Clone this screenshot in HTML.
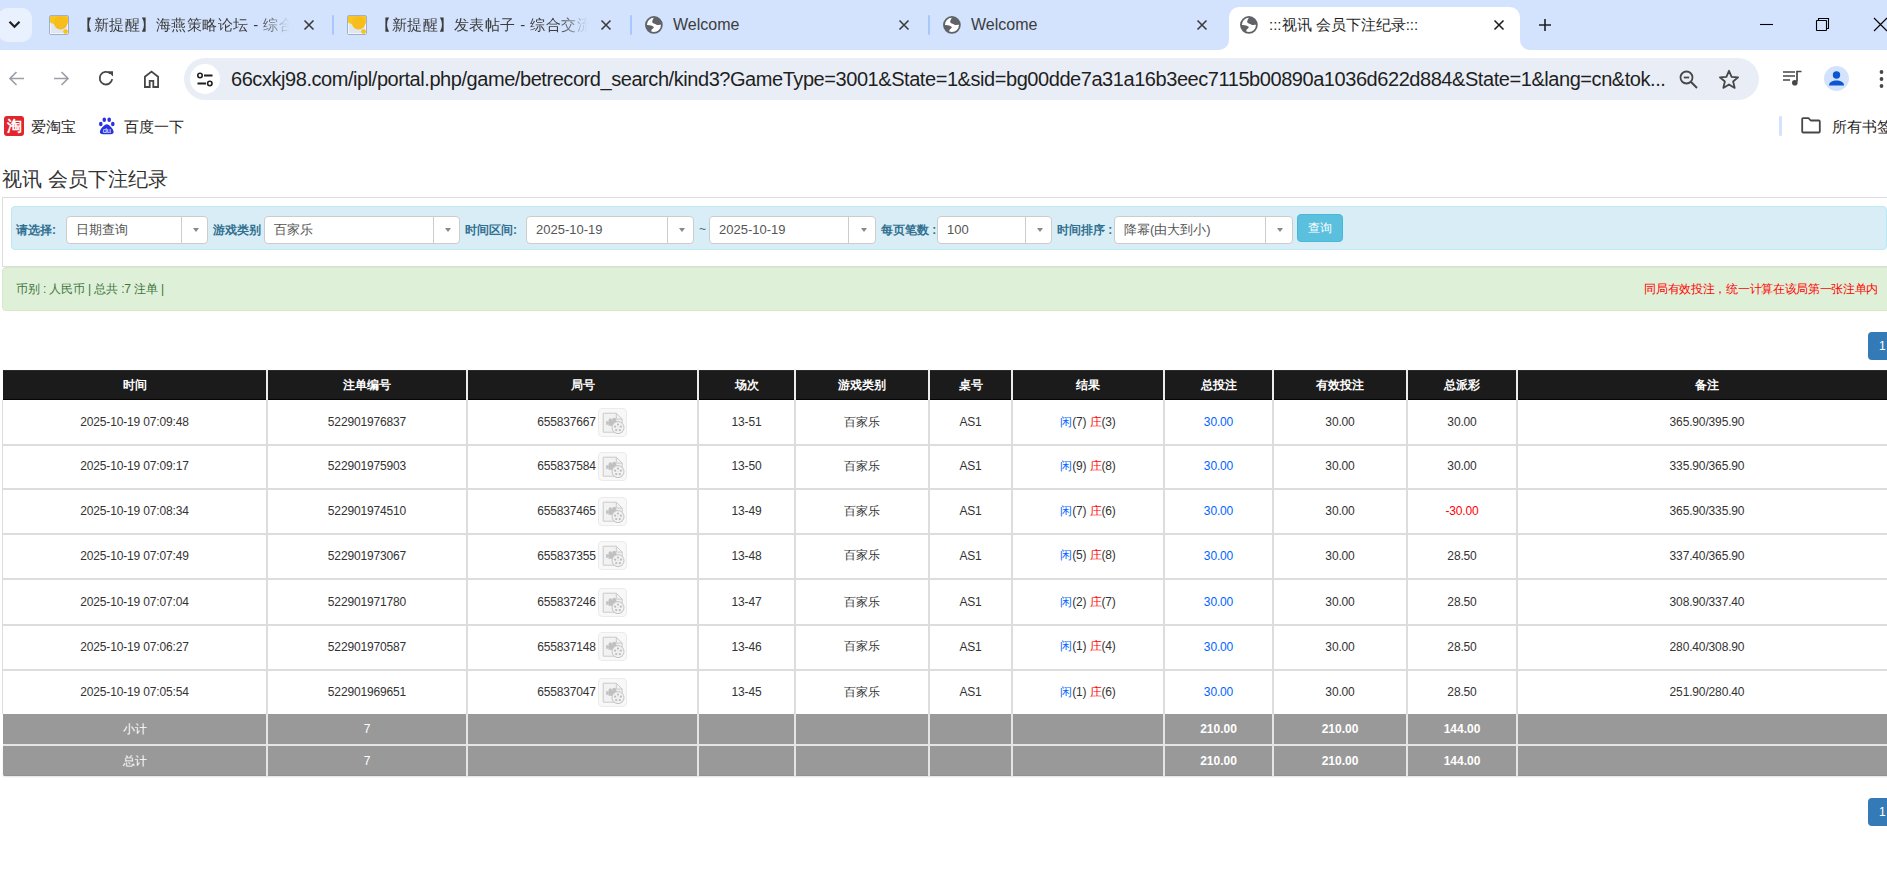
<!DOCTYPE html>
<html><head><meta charset="utf-8">
<style>
*{box-sizing:border-box;}
html,body{margin:0;padding:0;width:1887px;height:888px;overflow:hidden;background:#fff;font-family:"Liberation Sans",sans-serif;}
.abs{position:absolute;}
#tabstrip{position:absolute;left:0;top:0;width:1887px;height:50px;background:#d3e3fd;}
.tabtitle{position:absolute;top:14px;height:22px;font-size:15px;line-height:22px;color:#3c3c3c;white-space:nowrap;overflow:hidden;}
.fade{-webkit-mask-image:linear-gradient(to right,#000 86%,transparent 100%);}
.sep{position:absolute;top:15px;width:2px;height:20px;background:#a8c7fa;border-radius:1px;}
#toolbar{position:absolute;left:0;top:50px;width:1887px;height:58px;background:#fff;}
#omni{position:absolute;left:184px;top:58px;width:1575px;height:42px;border-radius:21px;background:#e9eef6;}
#url{position:absolute;left:231px;top:66px;height:26px;font-size:20px;line-height:26px;letter-spacing:-0.44px;color:#1f1f1f;white-space:nowrap;}
.bm{position:absolute;top:117px;font-size:15px;line-height:20px;color:#1f1f1f;white-space:nowrap;}
#page{position:absolute;left:0;top:0;width:1887px;height:888px;}
.title{position:absolute;left:2px;top:166px;font-size:20px;line-height:26px;color:#333;white-space:nowrap;}
#panel{position:absolute;left:2px;top:197px;width:1900px;height:70px;border:1px solid #ddd;}
#infobar{position:absolute;left:11px;top:206px;width:1876px;height:44px;background:#d9edf7;border:1px solid #bce8f1;border-radius:4px;}
.lbl{position:absolute;top:222px;font-size:12px;line-height:16px;font-weight:bold;color:#31708f;white-space:nowrap;}
.sel{position:absolute;top:216px;height:28px;background:#fff;border:1px solid #ccc;border-radius:4px;}
.sel .txt{position:absolute;left:9px;top:5px;font-size:13px;line-height:16px;color:#555;white-space:nowrap;}
.sel .dv{position:absolute;top:0;bottom:0;width:1px;background:#ccc;}
.sel .ar{position:absolute;top:11px;width:0;height:0;border-left:3.5px solid transparent;border-right:3.5px solid transparent;border-top:4px solid #888;}
#btn{position:absolute;left:1297px;top:214px;width:46px;height:28px;background:#5bc0de;border:1px solid #46b8da;border-radius:4px;color:#fff;font-size:12px;line-height:26px;text-align:center;}
#okbar{position:absolute;left:2px;top:267px;width:1900px;height:44px;background:#dff0d8;border:1px solid #d6e9c6;border-radius:4px;}
.oktxt{position:absolute;left:16px;top:281px;font-size:12px;line-height:16px;color:#3c763d;white-space:nowrap;letter-spacing:-0.14px;}
.redtxt{position:absolute;right:9px;top:281px;font-size:12px;line-height:16px;color:#f00;white-space:nowrap;letter-spacing:-0.32px;}
.pg{position:absolute;left:1868px;width:40px;height:28px;background:#337ab7;border-radius:4px;color:#fff;font-size:12px;line-height:28px;padding-left:11px;}

.thead{position:absolute;background:#1b1b1b;border-top:1px solid #2a2a2a;border-bottom:1px solid #050505;}
.th{position:absolute;display:flex;align-items:center;justify-content:center;color:#fff;font-weight:bold;font-size:12px;}
.vsh{position:absolute;width:2px;background:#ececec;border-radius:1px 1px 0 0;}
.vs{position:absolute;width:2px;background:#ddd;}
.hs{position:absolute;height:2px;background:#ddd;}
.td{position:absolute;display:flex;align-items:center;justify-content:center;color:#333;font-size:12px;white-space:nowrap;letter-spacing:-0.15px;}
.td .ic{margin-left:2px;margin-right:1px;}
.td b{font-weight:normal;}
.x{color:#0064ff;} .z{color:#f00;}
.blue{color:#0064ff;} .red{color:#f00;}
.tot{position:absolute;background:#999;box-sizing:border-box;}
.hl{position:absolute;}
.hst{position:absolute;height:2px;background:#e5e5e5;}
.vst{position:absolute;width:2px;background:#e5e5e5;}
.tt{position:absolute;display:flex;align-items:center;justify-content:center;color:#fff;font-size:12px;}
.tt.b{font-weight:bold;}
</style></head><body>
<div id="tabstrip"></div>
<div id="toolbar"></div>
<div id="omni"></div>
<!-- tab search button -->
<div class="abs" style="left:-2px;top:8px;width:34px;height:34px;border-radius:10px;background:#eaf1fe"></div>
<svg class="abs" style="left:8px;top:20px" width="13" height="9" viewBox="0 0 13 9"><path d="M1.5 1.8L6.5 6.8L11.5 1.8" fill="none" stroke="#1f1f1f" stroke-width="2.2"/></svg>
<!-- tab 1 -->
<svg class="abs" style="left:49px;top:15px" width="20" height="20" viewBox="0 0 20 20"><rect x="0.5" y="0.5" width="19" height="19" rx="1.5" fill="#dfe6ef" stroke="#9fb0c8"/><rect x="1.5" y="1.5" width="17" height="17" fill="none" stroke="#f3f6fa" stroke-width="1"/><path d="M1 1h18v7.6h-0.6A6.8 6.8 0 0 1 5.2 9.2Q3 8.6 1 7.6z" fill="#f9c520"/><circle cx="11.6" cy="7.8" r="6.6" fill="#f7bd1c"/><circle cx="16.6" cy="16.6" r="2.4" fill="#f8c21c"/></svg>
<div class="tabtitle fade" style="left:78px;width:212px;letter-spacing:0.5px">【新提醒】海燕策略论坛 - 综合交流</div>
<svg class="abs xclose" style="left:303px;top:19px" width="12" height="12" viewBox="0 0 12 12"><path d="M1.5 1.5L10.5 10.5M10.5 1.5L1.5 10.5" stroke="#3c3c3c" stroke-width="1.6"/></svg>
<div class="sep" style="left:332px"></div>
<!-- tab 2 -->
<svg class="abs" style="left:347px;top:15px" width="20" height="20" viewBox="0 0 20 20"><rect x="0.5" y="0.5" width="19" height="19" rx="1.5" fill="#dfe6ef" stroke="#9fb0c8"/><rect x="1.5" y="1.5" width="17" height="17" fill="none" stroke="#f3f6fa" stroke-width="1"/><path d="M1 1h18v7.6h-0.6A6.8 6.8 0 0 1 5.2 9.2Q3 8.6 1 7.6z" fill="#f9c520"/><circle cx="11.6" cy="7.8" r="6.6" fill="#f7bd1c"/><circle cx="16.6" cy="16.6" r="2.4" fill="#f8c21c"/></svg>
<div class="tabtitle fade" style="left:376px;width:212px;letter-spacing:0.5px">【新提醒】发表帖子 - 综合交流区</div>
<svg class="abs" style="left:600px;top:19px" width="12" height="12" viewBox="0 0 12 12"><path d="M1.5 1.5L10.5 10.5M10.5 1.5L1.5 10.5" stroke="#3c3c3c" stroke-width="1.6"/></svg>
<div class="sep" style="left:630px"></div>
<!-- tab 3 -->
<svg class="abs" style="left:645px;top:16px" width="18" height="18" viewBox="0 0 18 18"><defs><clipPath id="gc645"><circle cx="8.9" cy="8.9" r="8"/></clipPath></defs><circle cx="8.9" cy="8.9" r="7.9" fill="#fff"/><g clip-path="url(#gc645)" fill="#5f6368"><path d="M9.8 0C8.6 2.6 7 4.4 7.2 6.1C7.4 7.6 10 7.7 11.5 8.7C12.6 9.4 14.6 9.1 18 8.4V0Z"/><path d="M0 9C3 9.1 6.6 9.2 8.6 10.8C9.4 11.8 7.6 12.8 6.7 13.5C6.1 14.4 6.3 15.6 6.3 18H0Z"/></g><circle cx="8.9" cy="8.9" r="7.95" fill="none" stroke="#5f6368" stroke-width="1.8"/></svg>
<div class="tabtitle" style="left:673px;width:200px;font-size:16px">Welcome</div>
<svg class="abs" style="left:898px;top:19px" width="12" height="12" viewBox="0 0 12 12"><path d="M1.5 1.5L10.5 10.5M10.5 1.5L1.5 10.5" stroke="#3c3c3c" stroke-width="1.6"/></svg>
<div class="sep" style="left:928px"></div>
<!-- tab 4 -->
<svg class="abs" style="left:943px;top:16px" width="18" height="18" viewBox="0 0 18 18"><defs><clipPath id="gc943"><circle cx="8.9" cy="8.9" r="8"/></clipPath></defs><circle cx="8.9" cy="8.9" r="7.9" fill="#fff"/><g clip-path="url(#gc943)" fill="#5f6368"><path d="M9.8 0C8.6 2.6 7 4.4 7.2 6.1C7.4 7.6 10 7.7 11.5 8.7C12.6 9.4 14.6 9.1 18 8.4V0Z"/><path d="M0 9C3 9.1 6.6 9.2 8.6 10.8C9.4 11.8 7.6 12.8 6.7 13.5C6.1 14.4 6.3 15.6 6.3 18H0Z"/></g><circle cx="8.9" cy="8.9" r="7.95" fill="none" stroke="#5f6368" stroke-width="1.8"/></svg>
<div class="tabtitle" style="left:971px;width:200px;font-size:16px">Welcome</div>
<svg class="abs" style="left:1196px;top:19px" width="12" height="12" viewBox="0 0 12 12"><path d="M1.5 1.5L10.5 10.5M10.5 1.5L1.5 10.5" stroke="#3c3c3c" stroke-width="1.6"/></svg>
<!-- active tab -->
<svg class="abs" style="left:1219px;top:7px" width="311" height="43" viewBox="0 0 311 43"><path d="M0 43a10 10 0 0 0 10-10V10A10 10 0 0 1 20 0H291a10 10 0 0 1 10 10V33a10 10 0 0 0 10 10z" fill="#fff"/></svg>
<svg class="abs" style="left:1240px;top:16px" width="18" height="18" viewBox="0 0 18 18"><defs><clipPath id="gc1240"><circle cx="8.9" cy="8.9" r="8"/></clipPath></defs><circle cx="8.9" cy="8.9" r="7.9" fill="#fff"/><g clip-path="url(#gc1240)" fill="#5f6368"><path d="M9.8 0C8.6 2.6 7 4.4 7.2 6.1C7.4 7.6 10 7.7 11.5 8.7C12.6 9.4 14.6 9.1 18 8.4V0Z"/><path d="M0 9C3 9.1 6.6 9.2 8.6 10.8C9.4 11.8 7.6 12.8 6.7 13.5C6.1 14.4 6.3 15.6 6.3 18H0Z"/></g><circle cx="8.9" cy="8.9" r="7.95" fill="none" stroke="#5f6368" stroke-width="1.8"/></svg>
<div class="tabtitle" style="left:1269px;width:210px;color:#1f1f1f">:::视讯 会员下注纪录:::</div>
<svg class="abs" style="left:1493px;top:19px" width="12" height="12" viewBox="0 0 12 12"><path d="M1.5 1.5L10.5 10.5M10.5 1.5L1.5 10.5" stroke="#1f1f1f" stroke-width="1.6"/></svg>
<!-- new tab -->
<svg class="abs" style="left:1538px;top:18px" width="14" height="14" viewBox="0 0 14 14"><path d="M7 1v12M1 7h12" stroke="#1f1f1f" stroke-width="1.6"/></svg>
<!-- window controls -->
<svg class="abs" style="left:1759px;top:23px" width="15" height="3" viewBox="0 0 15 3"><path d="M1 1.5h13" stroke="#000" stroke-width="1.1"/></svg>
<svg class="abs" style="left:1815px;top:17px" width="15" height="15" viewBox="0 0 15 15"><rect x="1.5" y="3.5" width="10" height="10" rx="0.5" fill="none" stroke="#000" stroke-width="1.1"/><path d="M3.5 3.5V1.5h10v10h-2" fill="none" stroke="#000" stroke-width="1.1"/></svg>
<svg class="abs" style="left:1873px;top:17px" width="15" height="15" viewBox="0 0 15 15"><path d="M1 1L14 14M14 1L1 14" stroke="#000" stroke-width="1.1"/></svg>
<!-- toolbar icons -->
<svg class="abs" style="left:8px;top:70px" width="17" height="17" viewBox="0 0 17 17"><path d="M16 8.5H2.5M8.5 2L2 8.5L8.5 15" fill="none" stroke="#9aa0a6" stroke-width="1.7"/></svg>
<svg class="abs" style="left:53px;top:70px" width="17" height="17" viewBox="0 0 17 17"><path d="M1 8.5H14.5M8.5 2L15 8.5L8.5 15" fill="none" stroke="#9aa0a6" stroke-width="1.7"/></svg>
<svg class="abs" style="left:98px;top:70px" width="17" height="17" viewBox="0 0 17 17"><path d="M14.2 9.2A6.3 6.3 0 1 1 12.3 3.6" fill="none" stroke="#474747" stroke-width="1.8"/><path d="M9.6 1.2h5.4v5.4z" fill="#474747"/></svg>
<svg class="abs" style="left:143px;top:70px" width="17" height="18" viewBox="0 0 17 18"><path d="M1.9 17V6.8L8.5 1.6L15.1 6.8V17H10.3V10.8H6.7V17z" fill="none" stroke="#474747" stroke-width="1.8" stroke-linejoin="miter"/></svg>
<div class="abs" style="left:190px;top:64px;width:30px;height:30px;border-radius:50%;background:#fff"></div>
<svg class="abs" style="left:196px;top:72px" width="18" height="15" viewBox="0 0 18 15"><circle cx="4" cy="3.5" r="2.2" fill="none" stroke="#1f1f1f" stroke-width="1.6"/><path d="M8 3.5h8.5M1.5 11.5h8.5" stroke="#1f1f1f" stroke-width="1.8"/><circle cx="13.8" cy="11.5" r="2.2" fill="none" stroke="#1f1f1f" stroke-width="1.6"/></svg>
<svg class="abs" style="left:1679px;top:70px" width="20" height="20" viewBox="0 0 20 20"><circle cx="7.5" cy="7.5" r="6" fill="none" stroke="#474747" stroke-width="1.8"/><path d="M4.8 7.5h5.4" stroke="#474747" stroke-width="1.8"/><path d="M11.8 11.8L18 18" stroke="#474747" stroke-width="2"/></svg>
<svg class="abs" style="left:1718px;top:69px" width="22" height="21" viewBox="0 0 22 21"><path d="M11 1.8l2.6 6 6.5.5-5 4.2 1.6 6.4L11 15.4l-5.7 3.5 1.6-6.4-5-4.2 6.5-.5z" fill="none" stroke="#474747" stroke-width="1.8" stroke-linejoin="round"/></svg>
<svg class="abs" style="left:1782px;top:70px" width="21" height="17" viewBox="0 0 21 17"><path d="M1 2h12M1 6h12M1 10h7" stroke="#474747" stroke-width="1.7"/><path d="M15 11.5V1.5h4.5" fill="none" stroke="#474747" stroke-width="1.7"/><circle cx="12.8" cy="12.8" r="2.8" fill="#474747"/></svg>
<div class="abs" style="left:1824px;top:66px;width:25px;height:25px;border-radius:50%;background:#d3e3fd"></div>
<svg class="abs" style="left:1824px;top:66px" width="25" height="25" viewBox="0 0 25 25"><circle cx="12.5" cy="9" r="3.7" fill="#0b57d0"/><path d="M5 19.5c0-3.2 3.5-5 7.5-5s7.5 1.8 7.5 5z" fill="#0b57d0"/></svg>
<svg class="abs" style="left:1877px;top:69px" width="8" height="20" viewBox="0 0 8 20"><circle cx="4.5" cy="3" r="1.9" fill="#474747"/><circle cx="4.5" cy="10" r="1.9" fill="#474747"/><circle cx="4.5" cy="17" r="1.9" fill="#474747"/></svg>
<!-- bookmarks icons -->
<div class="abs" style="left:4px;top:116px;width:20px;height:20px;border-radius:3px;background:#e0262c;color:#fff;font-size:15px;line-height:20px;text-align:center;font-weight:bold">淘</div>
<svg class="abs" style="left:98px;top:116px" width="18" height="19" viewBox="0 0 18 19"><ellipse cx="2.8" cy="8" rx="1.8" ry="2.2" fill="#2932e1"/><ellipse cx="6.3" cy="3.8" rx="1.8" ry="2.3" fill="#2932e1"/><ellipse cx="11.2" cy="3.8" rx="1.8" ry="2.3" fill="#2932e1"/><ellipse cx="14.8" cy="8" rx="1.8" ry="2.2" fill="#2932e1"/><path d="M8.8 8.2C11 8.2 15.6 13 15.6 15.8C15.6 17.6 14.2 18.3 12.8 18.3H4.8C3.4 18.3 1.9 17.6 1.9 15.8C1.9 13 6.6 8.2 8.8 8.2Z" fill="#2932e1"/><text x="8.8" y="16.6" font-size="7.5" font-family="Liberation Sans" fill="#fff" text-anchor="middle">du</text></svg>
<div class="abs" style="left:1779px;top:116px;width:3px;height:20px;background:#d3e3fd;border-radius:1px"></div>
<svg class="abs" style="left:1800px;top:117px" width="22" height="17" viewBox="0 0 22 17"><path d="M2.2 2.2a1 1 0 0 1 1-1h5.3l2.2 2.3h8.1a1 1 0 0 1 1 1v10a1 1 0 0 1-1 1H3.2a1 1 0 0 1-1-1z" fill="none" stroke="#474747" stroke-width="1.8" stroke-linejoin="round"/></svg>

<div id="url">66cxkj98.com/ipl/portal.php/game/betrecord_search/kind3?GameType=3001&amp;State=1&amp;sid=bg00dde7a31a16b3eec7115b00890a1036d622d884&amp;State=1&amp;lang=cn&amp;tok...</div>

<div class="bm" style="left:31px">爱淘宝</div>
<div class="bm" style="left:124px">百度一下</div>
<div class="bm" style="left:1832px">所有书签</div>

<div class="title">视讯 会员下注纪录</div>
<div id="panel"></div>
<div id="infobar"></div>
<div class="lbl" style="left:16px">请选择:</div>
<div class="sel" style="left:66px;width:142px"><div class="txt">日期查询</div><div class="dv" style="left:114px"></div><div class="ar" style="left:126px"></div></div>
<div class="lbl" style="left:213px">游戏类别</div>
<div class="sel" style="left:264px;width:196px"><div class="txt">百家乐</div><div class="dv" style="left:168px"></div><div class="ar" style="left:180px"></div></div>
<div class="lbl" style="left:465px">时间区间:</div>
<div class="sel" style="left:526px;width:168px"><div class="txt">2025-10-19</div><div class="dv" style="left:140px"></div><div class="ar" style="left:152px"></div></div>
<div class="abs" style="left:699px;top:222px;font-size:12px;color:#31708f">~</div>
<div class="sel" style="left:709px;width:167px"><div class="txt">2025-10-19</div><div class="dv" style="left:138px"></div><div class="ar" style="left:151px"></div></div>
<div class="lbl" style="left:881px">每页笔数 :</div>
<div class="sel" style="left:937px;width:115px"><div class="txt">100</div><div class="dv" style="left:87px"></div><div class="ar" style="left:99px"></div></div>
<div class="lbl" style="left:1057px">时间排序 :</div>
<div class="sel" style="left:1114px;width:179px"><div class="txt">降幂(由大到小)</div><div class="dv" style="left:150px"></div><div class="ar" style="left:162px"></div></div>
<div id="btn">查询</div>
<div id="okbar"></div>
<div class="oktxt">币别 : 人民币 | 总共 :7 注单 |</div>
<div class="redtxt">同局有效投注，统一计算在该局第一张注单内</div>
<div class="pg" style="top:332px">1</div>
<div class="pg" style="top:798px">1</div>
<div id="tbl">
<div class="hl" style="left:2px;top:400px;width:1px;height:314px;background:#ddd"></div>
<div class="thead" style="left:3px;top:370px;width:1897px;height:30px"></div>
<div class="th" style="left:3px;top:370px;width:263px;height:30px">时间</div>
<div class="th" style="left:268px;top:370px;width:198px;height:30px">注单编号</div>
<div class="th" style="left:468px;top:370px;width:229px;height:30px">局号</div>
<div class="th" style="left:699px;top:370px;width:95px;height:30px">场次</div>
<div class="th" style="left:796px;top:370px;width:132px;height:30px">游戏类别</div>
<div class="th" style="left:930px;top:370px;width:81px;height:30px">桌号</div>
<div class="th" style="left:1013px;top:370px;width:150px;height:30px">结果</div>
<div class="th" style="left:1165px;top:370px;width:107px;height:30px">总投注</div>
<div class="th" style="left:1274px;top:370px;width:132px;height:30px">有效投注</div>
<div class="th" style="left:1408px;top:370px;width:108px;height:30px">总派彩</div>
<div class="th" style="left:1518px;top:370px;width:378px;height:30px">备注</div>
<div class="vsh" style="left:266px;top:369px;height:31px"></div>
<div class="vsh" style="left:466px;top:369px;height:31px"></div>
<div class="vsh" style="left:697px;top:369px;height:31px"></div>
<div class="vsh" style="left:794px;top:369px;height:31px"></div>
<div class="vsh" style="left:928px;top:369px;height:31px"></div>
<div class="vsh" style="left:1011px;top:369px;height:31px"></div>
<div class="vsh" style="left:1163px;top:369px;height:31px"></div>
<div class="vsh" style="left:1272px;top:369px;height:31px"></div>
<div class="vsh" style="left:1406px;top:369px;height:31px"></div>
<div class="vsh" style="left:1516px;top:369px;height:31px"></div>
<div class="vs" style="left:266px;top:400px;height:314px"></div>
<div class="vs" style="left:466px;top:400px;height:314px"></div>
<div class="vs" style="left:697px;top:400px;height:314px"></div>
<div class="vs" style="left:794px;top:400px;height:314px"></div>
<div class="vs" style="left:928px;top:400px;height:314px"></div>
<div class="vs" style="left:1011px;top:400px;height:314px"></div>
<div class="vs" style="left:1163px;top:400px;height:314px"></div>
<div class="vs" style="left:1272px;top:400px;height:314px"></div>
<div class="vs" style="left:1406px;top:400px;height:314px"></div>
<div class="vs" style="left:1516px;top:400px;height:314px"></div>
<div class="hs" style="left:3px;top:444px;width:1897px"></div>
<div class="hs" style="left:3px;top:488px;width:1897px"></div>
<div class="hs" style="left:3px;top:533px;width:1897px"></div>
<div class="hs" style="left:3px;top:578px;width:1897px"></div>
<div class="hs" style="left:3px;top:624px;width:1897px"></div>
<div class="hs" style="left:3px;top:669px;width:1897px"></div>
<div class="td" style="left:3px;top:400px;width:263px;height:44px">2025-10-19 07:09:48</div>
<div class="td" style="left:268px;top:400px;width:198px;height:44px">522901976837</div>
<div class="td" style="left:468px;top:400px;width:229px;height:44px"><span>655837667</span><svg class="ic" width="29" height="29" viewBox="0 0 29 29"><rect x="0.5" y="0.5" width="28" height="28" rx="3.5" fill="#f8f8f8" stroke="#ebebeb"/><path d="M5.2 5.2H18.3L24.2 11.1V24.2H5.2Z" fill="#f2f2f2" stroke="#cacaca"/><path d="M18.3 5.2V11.1H24.2" fill="none" stroke="#cacaca"/><rect x="10.5" y="12.2" width="8" height="5.6" fill="#c0c0c0"/><path d="M8.2 12.8L10.8 14V16L8.2 17.2Z" fill="#c0c0c0"/><circle cx="12.3" cy="11.8" r="1.6" fill="#c0c0c0"/><circle cx="16.2" cy="11.6" r="1.9" fill="#c0c0c0"/><circle cx="20" cy="19.6" r="6" fill="#f2f2f2" stroke="#c2c2c2"/><circle cx="20" cy="16.6" r="1.15" fill="#bdbdbd"/><circle cx="22.9" cy="18.7" r="1.15" fill="#bdbdbd"/><circle cx="21.8" cy="22.1" r="1.15" fill="#bdbdbd"/><circle cx="18.2" cy="22.1" r="1.15" fill="#bdbdbd"/><circle cx="17.1" cy="18.7" r="1.15" fill="#bdbdbd"/><circle cx="20" cy="19.6" r="0.5" fill="#cfcfcf"/></svg></div>
<div class="td" style="left:699px;top:400px;width:95px;height:44px">13-51</div>
<div class="td" style="left:796px;top:400px;width:132px;height:44px">百家乐</div>
<div class="td" style="left:930px;top:400px;width:81px;height:44px">AS1</div>
<div class="td" style="left:1013px;top:400px;width:150px;height:44px"><span><b class="x">闲</b>(7) <b class="z">庄</b>(3)</span></div>
<div class="td blue" style="left:1165px;top:400px;width:107px;height:44px">30.00</div>
<div class="td" style="left:1274px;top:400px;width:132px;height:44px">30.00</div>
<div class="td" style="left:1408px;top:400px;width:108px;height:44px">30.00</div>
<div class="td" style="left:1518px;top:400px;width:378px;height:44px">365.90/395.90</div>
<div class="td" style="left:3px;top:445px;width:263px;height:42px">2025-10-19 07:09:17</div>
<div class="td" style="left:268px;top:445px;width:198px;height:42px">522901975903</div>
<div class="td" style="left:468px;top:445px;width:229px;height:42px"><span>655837584</span><svg class="ic" width="29" height="29" viewBox="0 0 29 29"><rect x="0.5" y="0.5" width="28" height="28" rx="3.5" fill="#f8f8f8" stroke="#ebebeb"/><path d="M5.2 5.2H18.3L24.2 11.1V24.2H5.2Z" fill="#f2f2f2" stroke="#cacaca"/><path d="M18.3 5.2V11.1H24.2" fill="none" stroke="#cacaca"/><rect x="10.5" y="12.2" width="8" height="5.6" fill="#c0c0c0"/><path d="M8.2 12.8L10.8 14V16L8.2 17.2Z" fill="#c0c0c0"/><circle cx="12.3" cy="11.8" r="1.6" fill="#c0c0c0"/><circle cx="16.2" cy="11.6" r="1.9" fill="#c0c0c0"/><circle cx="20" cy="19.6" r="6" fill="#f2f2f2" stroke="#c2c2c2"/><circle cx="20" cy="16.6" r="1.15" fill="#bdbdbd"/><circle cx="22.9" cy="18.7" r="1.15" fill="#bdbdbd"/><circle cx="21.8" cy="22.1" r="1.15" fill="#bdbdbd"/><circle cx="18.2" cy="22.1" r="1.15" fill="#bdbdbd"/><circle cx="17.1" cy="18.7" r="1.15" fill="#bdbdbd"/><circle cx="20" cy="19.6" r="0.5" fill="#cfcfcf"/></svg></div>
<div class="td" style="left:699px;top:445px;width:95px;height:42px">13-50</div>
<div class="td" style="left:796px;top:445px;width:132px;height:42px">百家乐</div>
<div class="td" style="left:930px;top:445px;width:81px;height:42px">AS1</div>
<div class="td" style="left:1013px;top:445px;width:150px;height:42px"><span><b class="x">闲</b>(9) <b class="z">庄</b>(8)</span></div>
<div class="td blue" style="left:1165px;top:445px;width:107px;height:42px">30.00</div>
<div class="td" style="left:1274px;top:445px;width:132px;height:42px">30.00</div>
<div class="td" style="left:1408px;top:445px;width:108px;height:42px">30.00</div>
<div class="td" style="left:1518px;top:445px;width:378px;height:42px">335.90/365.90</div>
<div class="td" style="left:3px;top:489px;width:263px;height:44px">2025-10-19 07:08:34</div>
<div class="td" style="left:268px;top:489px;width:198px;height:44px">522901974510</div>
<div class="td" style="left:468px;top:489px;width:229px;height:44px"><span>655837465</span><svg class="ic" width="29" height="29" viewBox="0 0 29 29"><rect x="0.5" y="0.5" width="28" height="28" rx="3.5" fill="#f8f8f8" stroke="#ebebeb"/><path d="M5.2 5.2H18.3L24.2 11.1V24.2H5.2Z" fill="#f2f2f2" stroke="#cacaca"/><path d="M18.3 5.2V11.1H24.2" fill="none" stroke="#cacaca"/><rect x="10.5" y="12.2" width="8" height="5.6" fill="#c0c0c0"/><path d="M8.2 12.8L10.8 14V16L8.2 17.2Z" fill="#c0c0c0"/><circle cx="12.3" cy="11.8" r="1.6" fill="#c0c0c0"/><circle cx="16.2" cy="11.6" r="1.9" fill="#c0c0c0"/><circle cx="20" cy="19.6" r="6" fill="#f2f2f2" stroke="#c2c2c2"/><circle cx="20" cy="16.6" r="1.15" fill="#bdbdbd"/><circle cx="22.9" cy="18.7" r="1.15" fill="#bdbdbd"/><circle cx="21.8" cy="22.1" r="1.15" fill="#bdbdbd"/><circle cx="18.2" cy="22.1" r="1.15" fill="#bdbdbd"/><circle cx="17.1" cy="18.7" r="1.15" fill="#bdbdbd"/><circle cx="20" cy="19.6" r="0.5" fill="#cfcfcf"/></svg></div>
<div class="td" style="left:699px;top:489px;width:95px;height:44px">13-49</div>
<div class="td" style="left:796px;top:489px;width:132px;height:44px">百家乐</div>
<div class="td" style="left:930px;top:489px;width:81px;height:44px">AS1</div>
<div class="td" style="left:1013px;top:489px;width:150px;height:44px"><span><b class="x">闲</b>(7) <b class="z">庄</b>(6)</span></div>
<div class="td blue" style="left:1165px;top:489px;width:107px;height:44px">30.00</div>
<div class="td" style="left:1274px;top:489px;width:132px;height:44px">30.00</div>
<div class="td red" style="left:1408px;top:489px;width:108px;height:44px">-30.00</div>
<div class="td" style="left:1518px;top:489px;width:378px;height:44px">365.90/335.90</div>
<div class="td" style="left:3px;top:534px;width:263px;height:43px">2025-10-19 07:07:49</div>
<div class="td" style="left:268px;top:534px;width:198px;height:43px">522901973067</div>
<div class="td" style="left:468px;top:534px;width:229px;height:43px"><span>655837355</span><svg class="ic" width="29" height="29" viewBox="0 0 29 29"><rect x="0.5" y="0.5" width="28" height="28" rx="3.5" fill="#f8f8f8" stroke="#ebebeb"/><path d="M5.2 5.2H18.3L24.2 11.1V24.2H5.2Z" fill="#f2f2f2" stroke="#cacaca"/><path d="M18.3 5.2V11.1H24.2" fill="none" stroke="#cacaca"/><rect x="10.5" y="12.2" width="8" height="5.6" fill="#c0c0c0"/><path d="M8.2 12.8L10.8 14V16L8.2 17.2Z" fill="#c0c0c0"/><circle cx="12.3" cy="11.8" r="1.6" fill="#c0c0c0"/><circle cx="16.2" cy="11.6" r="1.9" fill="#c0c0c0"/><circle cx="20" cy="19.6" r="6" fill="#f2f2f2" stroke="#c2c2c2"/><circle cx="20" cy="16.6" r="1.15" fill="#bdbdbd"/><circle cx="22.9" cy="18.7" r="1.15" fill="#bdbdbd"/><circle cx="21.8" cy="22.1" r="1.15" fill="#bdbdbd"/><circle cx="18.2" cy="22.1" r="1.15" fill="#bdbdbd"/><circle cx="17.1" cy="18.7" r="1.15" fill="#bdbdbd"/><circle cx="20" cy="19.6" r="0.5" fill="#cfcfcf"/></svg></div>
<div class="td" style="left:699px;top:534px;width:95px;height:43px">13-48</div>
<div class="td" style="left:796px;top:534px;width:132px;height:43px">百家乐</div>
<div class="td" style="left:930px;top:534px;width:81px;height:43px">AS1</div>
<div class="td" style="left:1013px;top:534px;width:150px;height:43px"><span><b class="x">闲</b>(5) <b class="z">庄</b>(8)</span></div>
<div class="td blue" style="left:1165px;top:534px;width:107px;height:43px">30.00</div>
<div class="td" style="left:1274px;top:534px;width:132px;height:43px">30.00</div>
<div class="td" style="left:1408px;top:534px;width:108px;height:43px">28.50</div>
<div class="td" style="left:1518px;top:534px;width:378px;height:43px">337.40/365.90</div>
<div class="td" style="left:3px;top:580px;width:263px;height:44px">2025-10-19 07:07:04</div>
<div class="td" style="left:268px;top:580px;width:198px;height:44px">522901971780</div>
<div class="td" style="left:468px;top:580px;width:229px;height:44px"><span>655837246</span><svg class="ic" width="29" height="29" viewBox="0 0 29 29"><rect x="0.5" y="0.5" width="28" height="28" rx="3.5" fill="#f8f8f8" stroke="#ebebeb"/><path d="M5.2 5.2H18.3L24.2 11.1V24.2H5.2Z" fill="#f2f2f2" stroke="#cacaca"/><path d="M18.3 5.2V11.1H24.2" fill="none" stroke="#cacaca"/><rect x="10.5" y="12.2" width="8" height="5.6" fill="#c0c0c0"/><path d="M8.2 12.8L10.8 14V16L8.2 17.2Z" fill="#c0c0c0"/><circle cx="12.3" cy="11.8" r="1.6" fill="#c0c0c0"/><circle cx="16.2" cy="11.6" r="1.9" fill="#c0c0c0"/><circle cx="20" cy="19.6" r="6" fill="#f2f2f2" stroke="#c2c2c2"/><circle cx="20" cy="16.6" r="1.15" fill="#bdbdbd"/><circle cx="22.9" cy="18.7" r="1.15" fill="#bdbdbd"/><circle cx="21.8" cy="22.1" r="1.15" fill="#bdbdbd"/><circle cx="18.2" cy="22.1" r="1.15" fill="#bdbdbd"/><circle cx="17.1" cy="18.7" r="1.15" fill="#bdbdbd"/><circle cx="20" cy="19.6" r="0.5" fill="#cfcfcf"/></svg></div>
<div class="td" style="left:699px;top:580px;width:95px;height:44px">13-47</div>
<div class="td" style="left:796px;top:580px;width:132px;height:44px">百家乐</div>
<div class="td" style="left:930px;top:580px;width:81px;height:44px">AS1</div>
<div class="td" style="left:1013px;top:580px;width:150px;height:44px"><span><b class="x">闲</b>(2) <b class="z">庄</b>(7)</span></div>
<div class="td blue" style="left:1165px;top:580px;width:107px;height:44px">30.00</div>
<div class="td" style="left:1274px;top:580px;width:132px;height:44px">30.00</div>
<div class="td" style="left:1408px;top:580px;width:108px;height:44px">28.50</div>
<div class="td" style="left:1518px;top:580px;width:378px;height:44px">308.90/337.40</div>
<div class="td" style="left:3px;top:625px;width:263px;height:43px">2025-10-19 07:06:27</div>
<div class="td" style="left:268px;top:625px;width:198px;height:43px">522901970587</div>
<div class="td" style="left:468px;top:625px;width:229px;height:43px"><span>655837148</span><svg class="ic" width="29" height="29" viewBox="0 0 29 29"><rect x="0.5" y="0.5" width="28" height="28" rx="3.5" fill="#f8f8f8" stroke="#ebebeb"/><path d="M5.2 5.2H18.3L24.2 11.1V24.2H5.2Z" fill="#f2f2f2" stroke="#cacaca"/><path d="M18.3 5.2V11.1H24.2" fill="none" stroke="#cacaca"/><rect x="10.5" y="12.2" width="8" height="5.6" fill="#c0c0c0"/><path d="M8.2 12.8L10.8 14V16L8.2 17.2Z" fill="#c0c0c0"/><circle cx="12.3" cy="11.8" r="1.6" fill="#c0c0c0"/><circle cx="16.2" cy="11.6" r="1.9" fill="#c0c0c0"/><circle cx="20" cy="19.6" r="6" fill="#f2f2f2" stroke="#c2c2c2"/><circle cx="20" cy="16.6" r="1.15" fill="#bdbdbd"/><circle cx="22.9" cy="18.7" r="1.15" fill="#bdbdbd"/><circle cx="21.8" cy="22.1" r="1.15" fill="#bdbdbd"/><circle cx="18.2" cy="22.1" r="1.15" fill="#bdbdbd"/><circle cx="17.1" cy="18.7" r="1.15" fill="#bdbdbd"/><circle cx="20" cy="19.6" r="0.5" fill="#cfcfcf"/></svg></div>
<div class="td" style="left:699px;top:625px;width:95px;height:43px">13-46</div>
<div class="td" style="left:796px;top:625px;width:132px;height:43px">百家乐</div>
<div class="td" style="left:930px;top:625px;width:81px;height:43px">AS1</div>
<div class="td" style="left:1013px;top:625px;width:150px;height:43px"><span><b class="x">闲</b>(1) <b class="z">庄</b>(4)</span></div>
<div class="td blue" style="left:1165px;top:625px;width:107px;height:43px">30.00</div>
<div class="td" style="left:1274px;top:625px;width:132px;height:43px">30.00</div>
<div class="td" style="left:1408px;top:625px;width:108px;height:43px">28.50</div>
<div class="td" style="left:1518px;top:625px;width:378px;height:43px">280.40/308.90</div>
<div class="td" style="left:3px;top:670px;width:263px;height:44px">2025-10-19 07:05:54</div>
<div class="td" style="left:268px;top:670px;width:198px;height:44px">522901969651</div>
<div class="td" style="left:468px;top:670px;width:229px;height:44px"><span>655837047</span><svg class="ic" width="29" height="29" viewBox="0 0 29 29"><rect x="0.5" y="0.5" width="28" height="28" rx="3.5" fill="#f8f8f8" stroke="#ebebeb"/><path d="M5.2 5.2H18.3L24.2 11.1V24.2H5.2Z" fill="#f2f2f2" stroke="#cacaca"/><path d="M18.3 5.2V11.1H24.2" fill="none" stroke="#cacaca"/><rect x="10.5" y="12.2" width="8" height="5.6" fill="#c0c0c0"/><path d="M8.2 12.8L10.8 14V16L8.2 17.2Z" fill="#c0c0c0"/><circle cx="12.3" cy="11.8" r="1.6" fill="#c0c0c0"/><circle cx="16.2" cy="11.6" r="1.9" fill="#c0c0c0"/><circle cx="20" cy="19.6" r="6" fill="#f2f2f2" stroke="#c2c2c2"/><circle cx="20" cy="16.6" r="1.15" fill="#bdbdbd"/><circle cx="22.9" cy="18.7" r="1.15" fill="#bdbdbd"/><circle cx="21.8" cy="22.1" r="1.15" fill="#bdbdbd"/><circle cx="18.2" cy="22.1" r="1.15" fill="#bdbdbd"/><circle cx="17.1" cy="18.7" r="1.15" fill="#bdbdbd"/><circle cx="20" cy="19.6" r="0.5" fill="#cfcfcf"/></svg></div>
<div class="td" style="left:699px;top:670px;width:95px;height:44px">13-45</div>
<div class="td" style="left:796px;top:670px;width:132px;height:44px">百家乐</div>
<div class="td" style="left:930px;top:670px;width:81px;height:44px">AS1</div>
<div class="td" style="left:1013px;top:670px;width:150px;height:44px"><span><b class="x">闲</b>(1) <b class="z">庄</b>(6)</span></div>
<div class="td blue" style="left:1165px;top:670px;width:107px;height:44px">30.00</div>
<div class="td" style="left:1274px;top:670px;width:132px;height:44px">30.00</div>
<div class="td" style="left:1408px;top:670px;width:108px;height:44px">28.50</div>
<div class="td" style="left:1518px;top:670px;width:378px;height:44px">251.90/280.40</div>
<div class="tot" style="left:3px;top:714px;width:1897px;height:30px"></div>
<div class="tot" style="left:3px;top:746px;width:1897px;height:30px;border-bottom:1px solid #919191;border-radius:0 0 0 2px;box-shadow:0 1px 2px rgba(0,0,0,0.12)"></div>
<div class="hst" style="left:3px;top:744px;width:1897px"></div>
<div class="vst" style="left:266px;top:714px;height:62px"></div>
<div class="vst" style="left:466px;top:714px;height:62px"></div>
<div class="vst" style="left:697px;top:714px;height:62px"></div>
<div class="vst" style="left:794px;top:714px;height:62px"></div>
<div class="vst" style="left:928px;top:714px;height:62px"></div>
<div class="vst" style="left:1011px;top:714px;height:62px"></div>
<div class="vst" style="left:1163px;top:714px;height:62px"></div>
<div class="vst" style="left:1272px;top:714px;height:62px"></div>
<div class="vst" style="left:1406px;top:714px;height:62px"></div>
<div class="vst" style="left:1516px;top:714px;height:62px"></div>
<div class="tt" style="left:3px;top:714px;width:263px;height:30px">小计</div>
<div class="tt" style="left:268px;top:714px;width:198px;height:30px">7</div>
<div class="tt b" style="left:1165px;top:714px;width:107px;height:30px">210.00</div>
<div class="tt b" style="left:1274px;top:714px;width:132px;height:30px">210.00</div>
<div class="tt b" style="left:1408px;top:714px;width:108px;height:30px">144.00</div>
<div class="tt" style="left:3px;top:746px;width:263px;height:30px">总计</div>
<div class="tt" style="left:268px;top:746px;width:198px;height:30px">7</div>
<div class="tt b" style="left:1165px;top:746px;width:107px;height:30px">210.00</div>
<div class="tt b" style="left:1274px;top:746px;width:132px;height:30px">210.00</div>
<div class="tt b" style="left:1408px;top:746px;width:108px;height:30px">144.00</div>
</div>
</body></html>
